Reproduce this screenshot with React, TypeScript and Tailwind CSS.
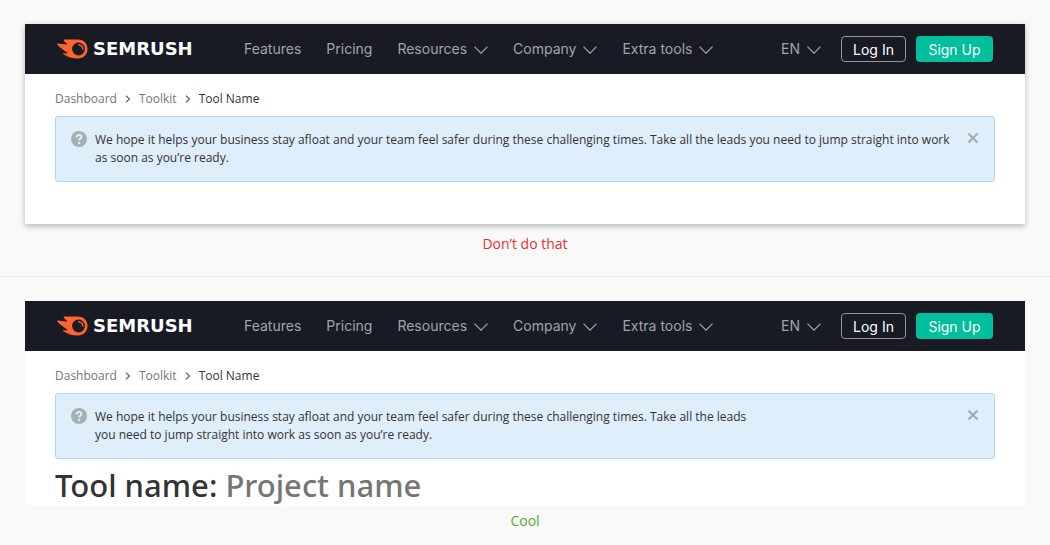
import type { ReactNode } from "react";

function Logo() {
  return (
    <a href="#" className="flex w-[137px] items-center gap-[5px]">
      <svg viewBox="0 0 31 20" className="h-5 w-[31px] shrink-0" aria-hidden="true">
        <path
          fill="#ff642d"
          d="M7.2 0.6 L21 0.6 C26.6 0.6 30.5 4.6 30.5 10 C30.5 15.4 26.4 19.5 20.9 19.5 C15.4 19.5 10.6 18 6.4 15.2 C5.7 14.7 5.9 14.2 6.6 14.2 L10 14.4 C10.7 14.4 10.8 14 10.2 13.7 L4.6 9.6 C3 8.3 1.6 6.8 0.3 5.4 C-0.1 4.9 0.1 4.5 0.7 4.5 C3.5 5 6.2 5.3 9.4 5.4 C10.2 5.4 10.3 4.9 9.7 4.6 C8.6 3.8 7.6 2.7 6.8 1.5 C6.4 1 6.6 0.6 7.2 0.6 Z"
        />
        <circle cx="21.5" cy="10" r="6.4" fill="#181a24" />
        <path d="M21.7 5.8 A4.2 4.2 0 0 1 25.8 9.9" fill="none" stroke="#ff642d" strokeWidth="1.5" strokeLinecap="round" />
      </svg>
      <span className="font-['DejaVu_Sans',sans-serif] text-lg leading-5 font-bold text-white">SEMRUSH</span>
    </a>
  );
}

function NavLink({ label, menu = false }: { label: string; menu?: boolean }) {
  return (
    <a href="#" className="flex items-center gap-[7px]">
      {label}
      {menu && (
        <svg viewBox="0 0 14 8" className="mt-[2px] h-2 w-[14px]" fill="none" stroke="currentColor" strokeWidth="1.2" aria-hidden="true">
          <path d="M0.5 0.7 L7 7.2 L13.5 0.7" />
        </svg>
      )}
    </a>
  );
}

function Header() {
  return (
    <header className="flex h-[50px] items-center bg-[#181a24] pr-8 pl-8 font-['Inter',sans-serif] text-sm text-[#a3a4a8]">
      <Logo />
      <nav className="ml-[50px] flex flex-1 items-center gap-[25px]">
        <NavLink label="Features" />
        <NavLink label="Pricing" />
        <NavLink label="Resources" menu />
        <NavLink label="Company" menu />
        <NavLink label="Extra tools" menu />
      </nav>
      <div className="flex items-center">
        <NavLink label="EN" menu />
        <button type="button" className="ml-5 h-[26px] w-[65px] rounded-[4px] border border-[#96979b] pt-[2px] text-white">
          Log In
        </button>
        <button type="button" className="ml-[10px] h-[26px] w-[77px] rounded-[4px] bg-[#00bf9c] pt-[2px] text-white">
          Sign Up
        </button>
      </div>
    </header>
  );
}

function Separator() {
  return (
    <svg viewBox="0 0 6 8" className="h-2 w-[6px]" fill="none" stroke="#757575" strokeWidth="1.5" aria-hidden="true">
      <path d="M1 0.8 L4.4 4 L1 7.2" />
    </svg>
  );
}

function Breadcrumbs() {
  return (
    <nav aria-label="Breadcrumb" className="flex h-[18px] items-center gap-2 text-xs text-[#757575]">
      <a href="#">Dashboard</a>
      <Separator />
      <a href="#">Toolkit</a>
      <Separator />
      <span className="text-[#333]">Tool Name</span>
    </nav>
  );
}

function Notice({ children }: { children: ReactNode }) {
  return (
    <div className="mt-2 flex min-h-[66px] items-start rounded-[3px] border border-[#b0d8f3] bg-[#deeefb] px-[15px] pt-[14px]">
      <svg viewBox="0 0 16 16" className="h-4 w-4 shrink-0" aria-hidden="true">
        <circle cx="8" cy="8" r="8" fill="#a6b0b3" />
        <path d="M5.6 6.4 C5.6 4.7 6.6 3.9 8.1 3.9 C9.6 3.9 10.5 4.7 10.5 5.9 C10.5 7.6 8.1 7.5 8.1 9.6" fill="none" stroke="#deeefb" strokeWidth="2" />
        <circle cx="8.1" cy="12" r="1.2" fill="#deeefb" />
      </svg>
      <p className="ml-2 flex-1 text-xs leading-[18px] text-[#333]">{children}</p>
      <button type="button" aria-label="Close" className="mt-px text-[#a2adb2]">
        <svg viewBox="0 0 12 12" className="h-3 w-3" fill="none" stroke="currentColor" strokeWidth="2.2" aria-hidden="true">
          <path d="M1.5 1.5 L10.5 10.5 M10.5 1.5 L1.5 10.5" />
        </svg>
      </button>
    </div>
  );
}

export default function App() {
  return (
    <main className="min-h-screen bg-[#f9f9f9] font-['Open_Sans','Noto_Sans',sans-serif]">
      <section className="border-b border-[#ececec] px-[25px] pt-6 pb-[22px]">
        <div className="bg-white shadow-[0_2px_6px_rgba(0,0,0,0.28)]">
          <Header />
          <div className="px-[30px] pt-4 pb-[42px]">
            <Breadcrumbs />
            <Notice>
              We hope it helps your business stay afloat and your team feel safer during these challenging times. Take all the
              leads you need to jump straight into work
              <br />
              as soon as you’re ready.
            </Notice>
          </div>
        </div>
        <p className="mt-[10px] text-center text-sm leading-5 text-[#ed2f2f]">Don’t do that</p>
      </section>
      <section className="px-[25px] pt-6">
        <div className="bg-white">
          <Header />
          <div className="px-[30px] pt-4">
            <Breadcrumbs />
            <Notice>
              We hope it helps your business stay afloat and your team feel safer during these challenging times. Take all the
              leads
              <br />
              you need to jump straight into work as soon as you’re ready.
            </Notice>
            <h1 className="mt-2 pb-[2px] font-['Noto_Sans',sans-serif] text-[31px] leading-9 font-medium text-[#333]">
              Tool name: <span className="text-[#757575]">Project name</span>
            </h1>
          </div>
        </div>
        <p className="mt-[6px] text-center text-sm leading-5 text-[#4fae33]">Cool</p>
      </section>
    </main>
  );
}
